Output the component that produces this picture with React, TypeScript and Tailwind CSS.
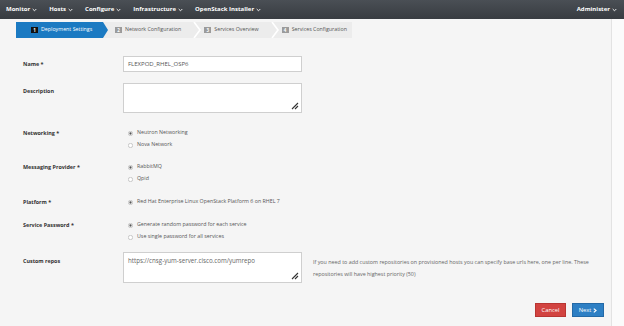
import React from "react";

const Chevron = ({ className = "" }: { className?: string }) => (
  <svg width="5" height="4" viewBox="0 0 5 4" className={className}>
    <path d="M0.7 1 L2.5 2.8 L4.3 1" stroke="currentColor" strokeWidth="0.9" fill="none" />
  </svg>
);

const Radio = ({ checked }: { checked?: boolean }) => (
  <svg width="5" height="5" viewBox="0 0 10 10" className="shrink-0">
    <circle cx="5" cy="5" r="4.3" fill="#fff" stroke="#aaa" strokeWidth="1.2" />
    {checked && <circle cx="5" cy="5" r="2.3" fill="#555" />}
  </svg>
);

const Grip = () => (
  <svg width="8" height="8" viewBox="0 0 8 8" className="absolute right-[2px] bottom-[2px]">
    <path d="M7 1 L1 7 M7 4 L4 7" stroke="#333" strokeWidth="1.1" />
  </svg>
);

const NavItem = ({ label }: { label: string }) => (
  <div className="flex items-center gap-[2px] text-white font-bold text-[6px]">
    <span>{label}</span>
    <Chevron />
  </div>
);

const Badge = ({ n, active }: { n: number; active?: boolean }) => (
  <span
    className={`inline-flex items-center justify-center w-[7px] h-[6px] text-[4.5px] font-bold text-white leading-none ${
      active ? "bg-[#111]" : "bg-[#9b9b9b]"
    }`}
  >
    {n}
  </span>
);

const Sep = () => (
  <svg width="8" height="16" viewBox="0 0 8 16" className="shrink-0">
    <path d="M1 0 L7 8 L1 16" stroke="#fff" strokeWidth="1.6" fill="none" />
  </svg>
);

const RadioLine = ({ checked, text }: { checked?: boolean; text: string }) => (
  <div className="flex items-center h-[12px] gap-[4px] pl-[5px] text-[5.3px] text-[#555]">
    <Radio checked={checked} />
    <span>{text}</span>
  </div>
);

const Label = ({ text }: { text: string }) => (
  <div className="w-[100px] shrink-0 h-[12px] flex items-center text-[5.4px] font-bold text-[#333]">{text}</div>
);

export default function App() {
  return (
    <div
      className="w-[624px] h-[326px] overflow-hidden bg-[#f5f5f5] flex flex-col"
      style={{ fontFamily: '"Open Sans", "Liberation Sans", sans-serif' }}
    >
      {/* navbar */}
      <div className="h-[19px] shrink-0 bg-gradient-to-b from-[#4a4f55] to-[#383c41] flex items-center justify-between pl-[6px] pr-[7px]">
        <div className="flex items-center gap-[12px]">
          <NavItem label="Monitor" />
          <NavItem label="Hosts" />
          <NavItem label="Configure" />
          <NavItem label="Infrastructure" />
          <NavItem label="OpenStack Installer" />
        </div>
        <NavItem label="Administer" />
      </div>

      <div className="flex flex-1">
        <div className="w-[612px] border-r border-[#e3e3e3] flex flex-col">
          {/* wizard */}
          <div className="mt-[3px] ml-[16px] flex h-[16px] w-[336px] bg-[#ececec] text-[5.3px]">
            <div className="relative w-[92px] h-full bg-[#1b7ac2] flex items-center pl-[15px] gap-[3px] text-white [clip-path:polygon(0_0,87px_0,92px_50%,87px_100%,0_100%)]">
              <Badge n={1} active />
              <span>Deployment Settings</span>
            </div>
            <div className="flex items-center gap-[3px] pl-[7px] pr-[12px] text-[#555]">
              <Badge n={2} />
              <span>Network Configuration</span>
            </div>
            <Sep />
            <div className="flex items-center gap-[3px] pl-[3px] pr-[12px] text-[#555]">
              <Badge n={3} />
              <span>Services Overview</span>
            </div>
            <Sep />
            <div className="flex items-center gap-[3px] pl-[3px] text-[#555]">
              <Badge n={4} />
              <span>Services Configuration</span>
            </div>
          </div>

          {/* form */}
          <div className="flex flex-col pl-[23px] mt-[18px]">
            <div className="flex items-center h-[16px]">
              <Label text="Name *" />
              <div className="w-[179px] h-[16px] bg-white border border-[#cfcfcf] flex items-center pl-[4px] text-[6px] text-[#555]">
                FLEXPOD_RHEL_OSP6
              </div>
            </div>

            <div className="flex mt-[11px]">
              <div className="pt-[2px]">
                <Label text="Description" />
              </div>
              <div className="relative w-[179px] h-[30px] bg-white border border-[#cfcfcf]">
                <Grip />
              </div>
            </div>

            <div className="flex mt-[14px]">
              <Label text="Networking *" />
              <div className="flex flex-col">
                <RadioLine checked text="Neutron Networking" />
                <RadioLine text="Nova Network" />
              </div>
            </div>

            <div className="flex mt-[10px]">
              <Label text="Messaging Provider *" />
              <div className="flex flex-col">
                <RadioLine checked text="RabbitMQ" />
                <RadioLine text="Qpid" />
              </div>
            </div>

            <div className="flex mt-[11px]">
              <Label text="Platform *" />
              <div className="flex flex-col">
                <RadioLine checked text="Red Hat Enterprise Linux OpenStack Platform 6 on RHEL 7" />
              </div>
            </div>

            <div className="flex mt-[11px]">
              <Label text="Service Password *" />
              <div className="flex flex-col">
                <RadioLine checked text="Generate random password for each service" />
                <RadioLine text="Use single password for all services" />
              </div>
            </div>

            <div className="flex mt-[9px]">
              <div className="pt-[3px]">
                <Label text="Custom repos" />
              </div>
              <div className="relative w-[179px] h-[31px] bg-white border border-[#cfcfcf] pl-[4px] pt-[3px] text-[6.2px] text-[#666]">
                https://cnsg-yum-server.cisco.com/yumrepo
                <Grip />
              </div>
              <div className="ml-[11px] pt-[4px] text-[5.35px] leading-[12px] text-[#666] whitespace-nowrap">
                If you need to add custom repositories on provisioned hosts you can specify base urls here, one per line. These
                <br />
                repositories will have highest priority (50)
              </div>
            </div>

            <div className="flex justify-end gap-[6px] mt-[20px] pr-[7px]">
              <div className="w-[31px] h-[14px] bg-[#d24340] border border-[#b83532] text-white text-[5.8px] flex items-center justify-center">
                Cancel
              </div>
              <div className="w-[32px] h-[14px] bg-[#2d7fc4] border border-[#2369a6] text-white text-[5.8px] flex items-center justify-center gap-[2px]">
                <span>Next</span>
                <svg width="4" height="5" viewBox="0 0 4 5">
                  <path d="M0.8 0.6 L3 2.5 L0.8 4.4" stroke="#fff" strokeWidth="1.2" fill="none" />
                </svg>
              </div>
            </div>
          </div>
        </div>
        <div className="flex-1 bg-[#fbfbfb]" />
      </div>
    </div>
  );
}
